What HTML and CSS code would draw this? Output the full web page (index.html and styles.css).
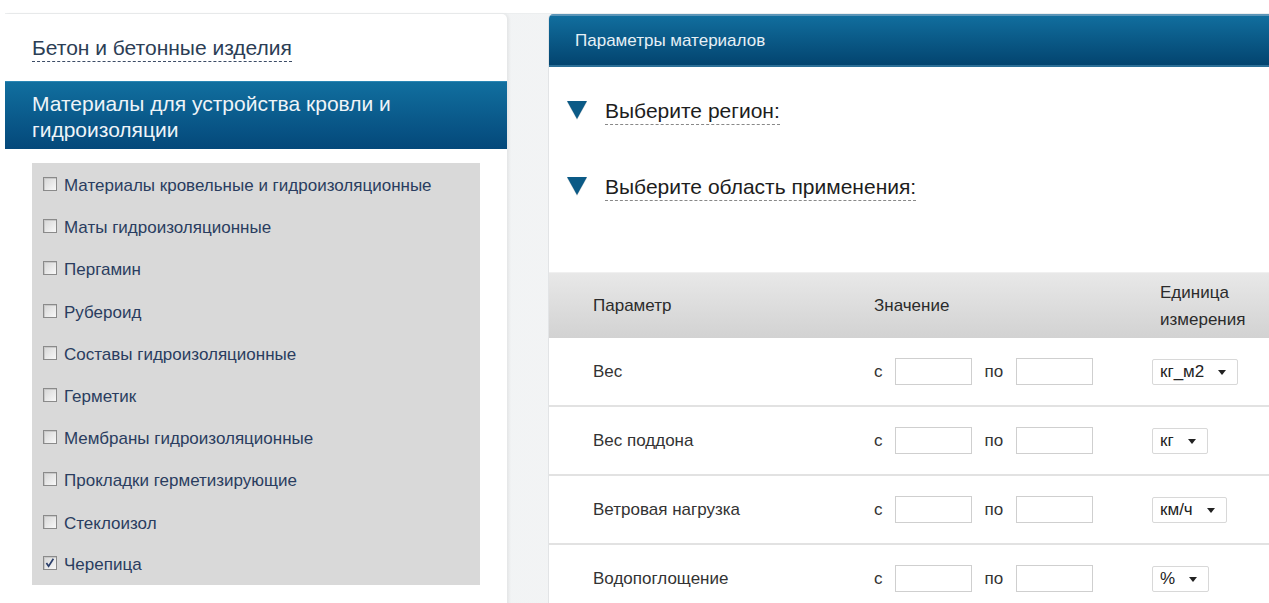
FILE: index.html
```html
<!DOCTYPE html>
<html lang="ru">
<head>
<meta charset="utf-8">
<title>Параметры материалов</title>
<link rel="stylesheet" href="styles.css">
</head>
<body>
<div class="page">
  <aside class="catalog">
    <div class="cat-link"><span class="dash">Бетон и бетонные изделия</span></div>
    <div class="cat-active">Материалы для устройства кровли и гидроизоляции</div>
    <ul class="subcats">
      <li><span class="cb"></span>Материалы кровельные и гидроизоляционные</li>
      <li><span class="cb"></span>Маты гидроизоляционные</li>
      <li><span class="cb"></span>Пергамин</li>
      <li><span class="cb"></span>Рубероид</li>
      <li><span class="cb"></span>Составы гидроизоляционные</li>
      <li><span class="cb"></span>Герметик</li>
      <li><span class="cb"></span>Мембраны гидроизоляционные</li>
      <li><span class="cb"></span>Прокладки герметизирующие</li>
      <li><span class="cb"></span>Стеклоизол</li>
      <li><span class="cb"><svg viewBox="0 0 14 14" width="14" height="14"><path d="M3.4 7 L5.6 10.2 L10.4 2.8" fill="none" stroke="#2b3f6b" stroke-width="1.7"/></svg></span>Черепица</li>
    </ul>
  </aside>
  <main class="params">
    <div class="params-head">Параметры материалов</div>
    <div class="filters">
      <div class="filter"><span class="tri"></span><span class="dash">Выберите регион:</span></div>
      <div class="filter"><span class="tri"></span><span class="dash">Выберите область применения:</span></div>
    </div>
    <div class="table">
      <div class="row head">
        <div class="c-name">Параметр</div>
        <div class="c-val">Значение</div>
        <div class="c-unit">Единица<br>измерения</div>
      </div>
      <div class="row">
        <div class="c-name">Вес</div>
        <div class="c-val">с <span class="inp"></span> по <span class="inp"></span></div>
        <div class="c-unit"><span class="sel">кг_м2 <i class="arr"></i></span></div>
      </div>
      <div class="row">
        <div class="c-name">Вес поддона</div>
        <div class="c-val">с <span class="inp"></span> по <span class="inp"></span></div>
        <div class="c-unit"><span class="sel">кг <i class="arr"></i></span></div>
      </div>
      <div class="row">
        <div class="c-name">Ветровая нагрузка</div>
        <div class="c-val">с <span class="inp"></span> по <span class="inp"></span></div>
        <div class="c-unit"><span class="sel">км/ч <i class="arr"></i></span></div>
      </div>
      <div class="row">
        <div class="c-name">Водопоглощение</div>
        <div class="c-val">с <span class="inp"></span> по <span class="inp"></span></div>
        <div class="c-unit"><span class="sel">% <i class="arr"></i></span></div>
      </div>
    </div>
  </main>
</div>
</body>
</html>
```
FILE: styles.css
```css
html, body {
  margin: 0;
  padding: 0;
  background: #fff;
  overflow: hidden;
  height: 603px;
}

body {
  font-family: "Liberation Sans", Arial, sans-serif;
}

.page {
  display: flex;
  margin: 13px 0 0 5px;
  height: 600px;
  background: linear-gradient(90deg, #e9eef2 0, #f1f3f4 8px, #f3f4f5 100%);
  border-top: 1px solid #eceeef;
}

/* left catalogue column */
.catalog {
  width: 502px;
  flex: none;
  background: #fff;
  border-top-right-radius: 5px;
  box-shadow: 2px 0 3px rgba(0, 0, 0, 0.06);
}

.dash {
  border-bottom: 1px dashed #555;
}

.cat-link {
  padding: 22px 0 0 27px;
  height: 67px;
  box-sizing: border-box;
  font-size: 21px;
  line-height: 24px;
  color: #2c3e55;
}

.cat-link .dash {
  padding-bottom: 2px;
  border-bottom-color: #3c4c66;
}

.cat-active {
  height: 68px;
  box-sizing: border-box;
  padding: 9px 60px 0 27px;
  font-size: 21px;
  line-height: 26px;
  color: #eef4f8;
  background: linear-gradient(#116f9f, #04487a);
  border-top: 1px solid #2a86b4;
}

.subcats {
  list-style: none;
  margin: 14px 0 0 27px;
  padding: 2px 0 0 11px;
  width: 437px;
  background: #d9d9d9;
}

.subcats li {
  height: 42.2px;
  display: flex;
  align-items: center;
  font-size: 17px;
  color: #2a3d60;
}

.subcats li:last-child {
  height: 40px;
}

.cb {
  width: 14px;
  height: 14px;
  flex: none;
  box-sizing: border-box;
  border: 1px solid #8a8a8a;
  box-shadow: inset 1px 1px 0 #c8c8c8;
  background: linear-gradient(135deg, #d6d6d6, #f8f8f8);
  margin: -4px 7px 0 0;
  position: relative;
}

.cb svg {
  position: absolute;
  left: -1px;
  top: -1px;
}

/* right parameters panel */
.params {
  margin-left: 41px;
  flex: 1;
  background: #fff;
  border-top-left-radius: 5px;
  border-left: 1px solid #e2e4e6;
  overflow: hidden;
}

.params-head {
  height: 53px;
  box-sizing: border-box;
  padding: 15px 0 0 26px;
  font-size: 17px;
  color: #e6f0f6;
  background: linear-gradient(#116e9e, #03446f);
  border-top: 2px solid #5b95b8;
  border-bottom: 2px solid #2c6f97;
}

.filters {
  padding: 30px 0 0 18px;
  height: 205px;
  box-sizing: border-box;
}

.filter {
  display: flex;
  align-items: center;
  font-size: 21px;
  color: #1d1d1d;
  height: 30px;
  margin-bottom: 46px;
}

.filter .dash {
  border-bottom-color: #888;
  padding-bottom: 1px;
}

.tri {
  width: 0;
  height: 0;
  border-left: 10px solid transparent;
  border-right: 10px solid transparent;
  border-top: 18px solid #0b5a86;
  margin: 0 18px 5px 0;
  filter: drop-shadow(0 1px 0 rgba(0, 0, 0, 0.15));
}

.table {
  width: 760px;
  font-size: 17px;
  color: #333;
}

.row {
  display: flex;
  align-items: center;
  height: 69px;
  border-bottom: 2px solid #e2e2e2;
  box-sizing: border-box;
}

.row.head {
  height: 66px;
  background: linear-gradient(#e8e8e8, #d2d2d2);
  border-top: 1px solid #f0f0f0;
  border-bottom: none;
  color: #2b2b2b;
}

.c-name {
  width: 325px;
  padding-left: 44px;
  box-sizing: border-box;
}

.c-val {
  width: 278px;
  display: flex;
  align-items: center;
}

.c-unit {
  flex: 1;
  line-height: 27px;
}

.row.head .c-unit {
  padding-left: 8px;
}

.inp {
  display: inline-block;
  width: 77px;
  height: 27px;
  box-sizing: border-box;
  border: 1px solid #cfcfcf;
  background: #fff;
  margin: 0 13px 0 12px;
}

.c-val .inp:last-child {
  margin-left: 13px;
}

.sel {
  display: inline-flex;
  align-items: center;
  height: 26px;
  box-sizing: border-box;
  padding: 0 11px 0 7px;
  border: 1px solid #d8d8d8;
  border-radius: 2px;
  background: #fff;
  font-size: 17px;
  line-height: 20px;
  color: #222;
  gap: 14px;
}

.arr {
  width: 0;
  height: 0;
  border-left: 4px solid transparent;
  border-right: 4px solid transparent;
  border-top: 5px solid #222;
}
```
